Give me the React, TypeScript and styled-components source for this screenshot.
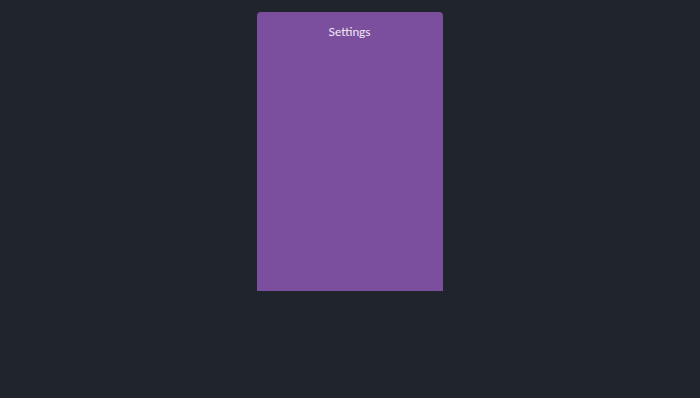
import styled, { createGlobalStyle } from "styled-components"

const Global = createGlobalStyle`
  html, body {
    margin: 0;
    padding: 0;
    background: #20252d;
    height: 100%;
  }
  #root {
    min-height: 100vh;
  }
`

const Page = styled.div`
  display: flex;
  justify-content: center;
  padding-top: 12px;
  min-height: 100vh;
  box-sizing: border-box;
`

const Panel = styled.div`
  width: 186px;
  height: 279px;
  margin-left: -1px;
  background: #7b4f9d;
  border-radius: 4px 4px 0 0;
  display: flex;
  flex-direction: column;
  align-items: center;
  padding-top: 13px;
  box-sizing: border-box;
`

const Title = styled.h2`
  margin: 0;
  font-family: Lato, "Noto Sans", sans-serif;
  font-weight: 400;
  font-size: 12px;
  color: #f3e9f7;
  line-height: 14px;
`

const App = () => {
  return (
    <>
      <Global />
      <Page>
        <Panel>
          <Title>Settings</Title>
        </Panel>
      </Page>
    </>
  )
}

export default App
